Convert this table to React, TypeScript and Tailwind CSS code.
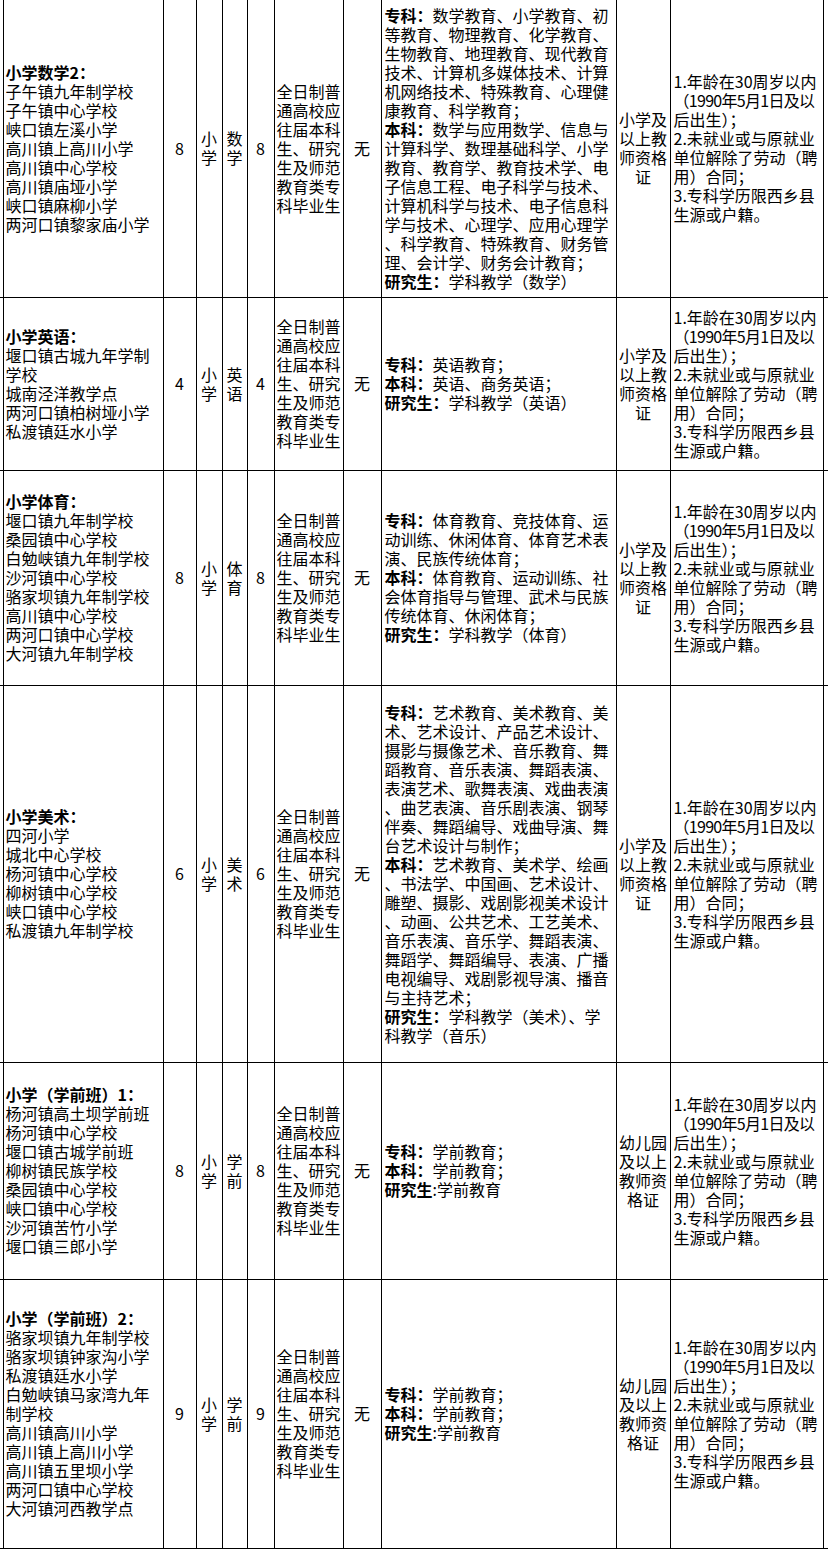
import React from "react";

type Seg = { b?: boolean; t: string };
type Line = string | Seg[];

type Row = {
  h: string;
  dashed?: boolean;
  title: string;
  schools: string[];
  n: string;
  level: string[];
  subj: string[];
  majors: Line[];
  cert: string[];
};

const edu = ["全日制普", "通高校应", "往届本科", "生、研究", "生及师范", "教育类专", "科毕业生"];
const other: Line[] = [
  "1.年龄在30周岁以内",
  [{ t: "（1990年5月1日及以" }],
  "后出生）；",
  "2.未就业或与原就业",
  "单位解除了劳动（聘",
  "用）合同；",
  "3.专科学历限西乡县",
  "生源或户籍。",
];
const certA = ["小学及", "以上教", "师资格", "证"];
const certB = ["幼儿园", "及以上", "教师资", "格证"];

const L = (label: string, rest: string): Seg[] => [{ b: true, t: label }, { t: rest }];

const preMajors: Line[] = [
  L("专科：", "学前教育；"),
  L("本科：", "学前教育；"),
  [{ b: true, t: "研究生" }, { t: ":学前教育" }],
];

const rows: Row[] = [
  {
    h: "h-[297px]",
    title: "小学数学2：",
    schools: [
      "子午镇九年制学校",
      "子午镇中心学校",
      "峡口镇左溪小学",
      "高川镇上高川小学",
      "高川镇中心学校",
      "高川镇庙垭小学",
      "峡口镇麻柳小学",
      "两河口镇黎家庙小学",
    ],
    n: "8",
    level: ["小", "学"],
    subj: ["数", "学"],
    majors: [
      L("专科：", "数学教育、小学教育、初"),
      "等教育、物理教育、化学教育、",
      "生物教育、地理教育、现代教育",
      "技术、计算机多媒体技术、计算",
      "机网络技术、特殊教育、心理健",
      "康教育、科学教育；",
      L("本科：", "数学与应用数学、信息与"),
      "计算科学、数理基础科学、小学",
      "教育、教育学、教育技术学、电",
      "子信息工程、电子科学与技术、",
      "计算机科学与技术、电子信息科",
      "学与技术、心理学、应用心理学",
      "、科学教育、特殊教育、财务管",
      "理、会计学、财务会计教育；",
      L("研究生：", "学科教学（数学）"),
    ],
    cert: certA,
  },
  {
    h: "h-[173px]",
    title: "小学英语：",
    schools: ["堰口镇古城九年学制", "学校", "城南泾洋教学点", "两河口镇柏树垭小学", "私渡镇廷水小学"],
    n: "4",
    level: ["小", "学"],
    subj: ["英", "语"],
    majors: [L("专科：", "英语教育；"), L("本科：", "英语、商务英语；"), L("研究生：", "学科教学（英语）")],
    cert: certA,
  },
  {
    h: "h-[215px]",
    dashed: true,
    title: "小学体育：",
    schools: [
      "堰口镇九年制学校",
      "桑园镇中心学校",
      "白勉峡镇九年制学校",
      "沙河镇中心学校",
      "骆家坝镇九年制学校",
      "高川镇中心学校",
      "两河口镇中心学校",
      "大河镇九年制学校",
    ],
    n: "8",
    level: ["小", "学"],
    subj: ["体", "育"],
    majors: [
      L("专科：", "体育教育、竞技体育、运"),
      "动训练、休闲体育、体育艺术表",
      "演、民族传统体育；",
      L("本科：", "体育教育、运动训练、社"),
      "会体育指导与管理、武术与民族",
      "传统体育、休闲体育；",
      L("研究生：", "学科教学（体育）"),
    ],
    cert: certA,
  },
  {
    h: "h-[377px]",
    title: "小学美术：",
    schools: ["四河小学", "城北中心学校", "杨河镇中心学校", "柳树镇中心学校", "峡口镇中心学校", "私渡镇九年制学校"],
    n: "6",
    level: ["小", "学"],
    subj: ["美", "术"],
    majors: [
      L("专科：", "艺术教育、美术教育、美"),
      "术、艺术设计、产品艺术设计、",
      "摄影与摄像艺术、音乐教育、舞",
      "蹈教育、音乐表演、舞蹈表演、",
      "表演艺术、歌舞表演、戏曲表演",
      "、曲艺表演、音乐剧表演、钢琴",
      "伴奏、舞蹈编导、戏曲导演、舞",
      "台艺术设计与制作；",
      L("本科：", "艺术教育、美术学、绘画"),
      "、书法学、中国画、艺术设计、",
      "雕塑、摄影、戏剧影视美术设计",
      "、动画、公共艺术、工艺美术、",
      "音乐表演、音乐学、舞蹈表演、",
      "舞蹈学、舞蹈编导、表演、广播",
      "电视编导、戏剧影视导演、播音",
      "与主持艺术；",
      L("研究生：", "学科教学（美术）、学"),
      "科教学（音乐）",
    ],
    cert: certA,
  },
  {
    h: "h-[217px]",
    dashed: true,
    title: "小学（学前班）1：",
    schools: [
      "杨河镇高土坝学前班",
      "杨河镇中心学校",
      "堰口镇古城学前班",
      "柳树镇民族学校",
      "桑园镇中心学校",
      "峡口镇中心学校",
      "沙河镇苦竹小学",
      "堰口镇三郎小学",
    ],
    n: "8",
    level: ["小", "学"],
    subj: ["学", "前"],
    majors: preMajors,
    cert: certB,
  },
  {
    h: "h-[269px]",
    title: "小学（学前班）2：",
    schools: [
      "骆家坝镇九年制学校",
      "骆家坝镇钟家沟小学",
      "私渡镇廷水小学",
      "白勉峡镇马家湾九年",
      "制学校",
      "高川镇高川小学",
      "高川镇上高川小学",
      "高川镇五里坝小学",
      "两河口镇中心学校",
      "大河镇河西教学点",
    ],
    n: "9",
    level: ["小", "学"],
    subj: ["学", "前"],
    majors: preMajors,
    cert: certB,
  },
];

function Lines({ lines, center }: { lines: Line[]; center?: boolean }) {
  return (
    <div className={center ? "text-center" : "text-left"}>
      {lines.map((ln, i) => (
        <div key={i} className="whitespace-nowrap">
          {typeof ln === "string"
            ? ln
            : ln.map((s, j) => (
                <span
                  key={j}
                  className={s.b ? "font-bold" : s.t.startsWith("（1990") ? "tracking-[-0.7px]" : ""}
                >
                  {s.t}
                </span>
              ))}
        </div>
      ))}
    </div>
  );
}

export default function App() {
  return (
    <div
      className="w-[828px] h-[1552px] bg-white text-black overflow-hidden text-[16px] leading-[19px]"
      style={{ fontFamily: '"Noto Sans CJK SC", "Noto Sans", sans-serif' }}
    >
      <table className="table-fixed border-collapse w-[828px]">
        <colgroup>
          <col className="w-[3px]" />
          <col className="w-[160px]" />
          <col className="w-[33px]" />
          <col className="w-[26px]" />
          <col className="w-[25px]" />
          <col className="w-[27px]" />
          <col className="w-[69px]" />
          <col className="w-[38px]" />
          <col className="w-[235px]" />
          <col className="w-[54px]" />
          <col className="w-[153px]" />
          <col className="w-[5px]" />
        </colgroup>
        <tbody>
          {rows.map((r, i) => {
            const bb = r.dashed ? "border-b border-dashed border-b-black" : "border-b border-solid border-b-black";
            const cell = `${bb} border-l border-l-black border-solid align-middle p-0`;
            return (
              <tr key={i} className={r.h}>
                <td className={`${bb} p-0`} />
                <td className={`${cell} pl-[2px]`}>
                  <div className="whitespace-nowrap font-bold">{r.title}</div>
                  <Lines lines={r.schools} />
                </td>
                <td className={`${cell} text-center`}>{r.n}</td>
                <td className={`${cell}`}>
                  <Lines lines={r.level} center />
                </td>
                <td className={`${cell}`}>
                  <Lines lines={r.subj} center />
                </td>
                <td className={`${cell} text-center`}>{r.n}</td>
                <td className={`${cell} pl-[2px]`}>
                  <Lines lines={edu} />
                </td>
                <td className={`${cell} text-center`}>无</td>
                <td className={`${cell} pl-[3px]`}>
                  <Lines lines={r.majors} />
                </td>
                <td className={`${cell}`}>
                  <Lines lines={r.cert} center />
                </td>
                <td className={`${cell} pl-[3px]`}>
                  <Lines lines={other} />
                </td>
                <td className={`${bb} border-l border-l-black border-solid p-0`} />
              </tr>
            );
          })}
        </tbody>
      </table>
    </div>
  );
}
